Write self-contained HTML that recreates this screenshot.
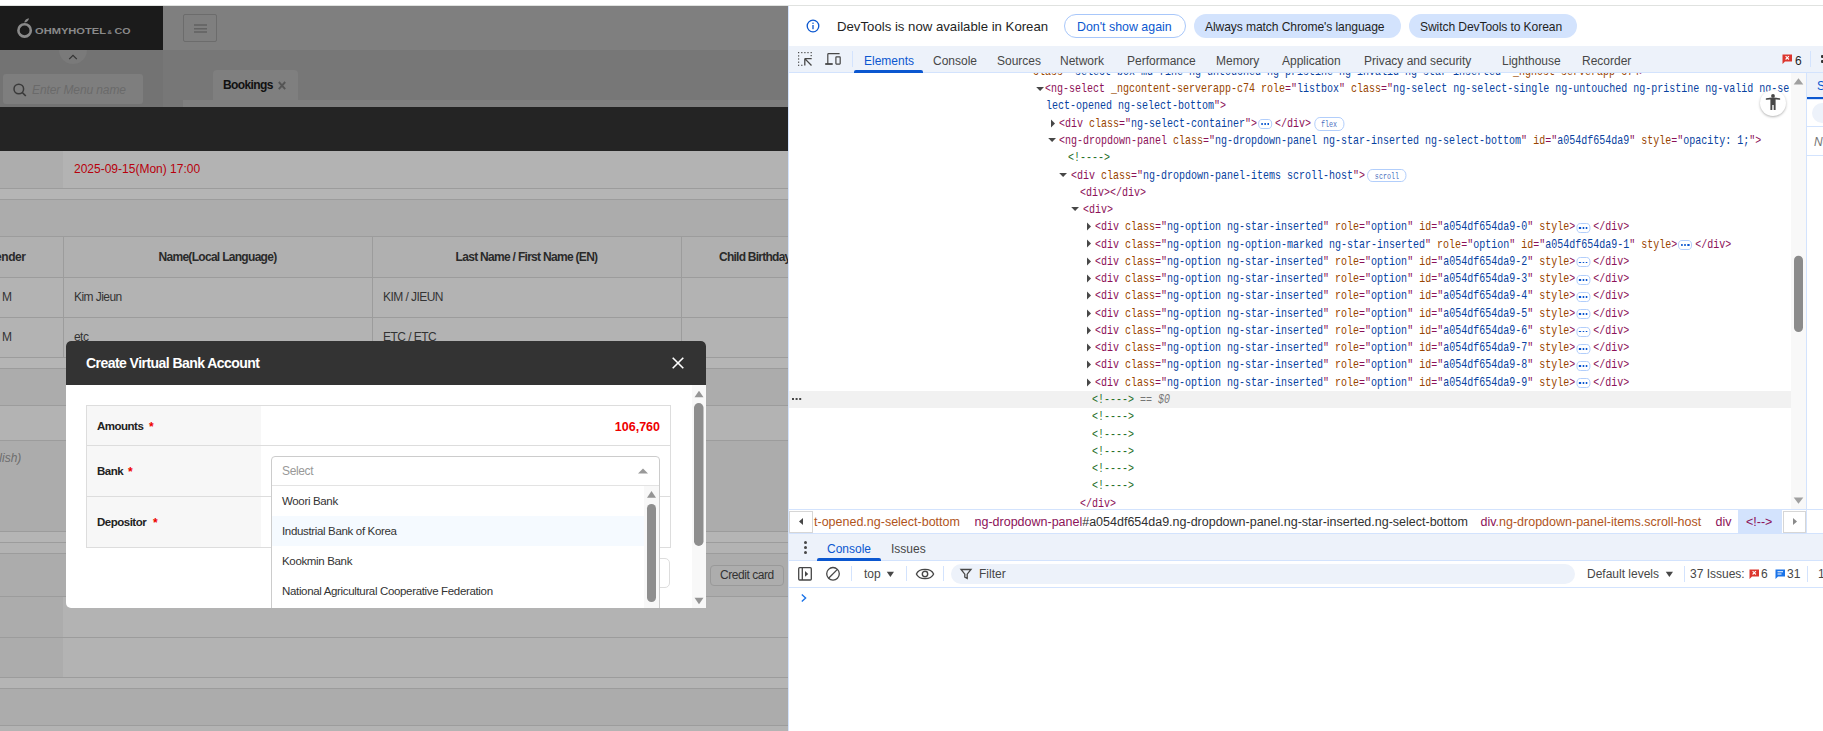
<!DOCTYPE html>
<html><head><meta charset="utf-8">
<style>
*{box-sizing:border-box;margin:0;padding:0}
html,body{width:1823px;height:731px;overflow:hidden;background:#fff;font-family:"Liberation Sans",sans-serif}
.a{position:absolute}
.hl{position:absolute;left:0;width:788px;height:1px;background:#9c9c9c}
.t{position:absolute;white-space:nowrap;line-height:1}
.mono{font-family:"Liberation Mono",monospace}
.cl{position:absolute;white-space:pre;font-family:"Liberation Mono",monospace;font-size:13px;height:17.27px;line-height:17.27px;transform:scaleX(0.76923);transform-origin:0 50%}
.cl i{display:inline-block;font-style:normal;vertical-align:middle}
.bdots{display:inline-flex !important;align-items:center;justify-content:center;width:18.2px;height:10px;border:1px solid #a8c7fa;border-radius:5px;margin:0 3.9px 0 1.3px;position:relative;top:1px}
.bdots b{display:block;width:2.2px;height:1.8px;background:#0b57d0;margin:0 1px}
.bg{height:13.5px;border:1px solid #a8c7fa;border-radius:7px;font-family:"Liberation Mono",monospace;font-size:8.7px;line-height:15px;color:#4a6fc0;overflow:hidden;text-align:center;position:relative;top:0.5px}
.eq{color:#757575;font-style:italic}
.tb{top:55px;font-size:12px;color:#474747}
.tb2{top:542.5px;font-size:12px;color:#474747}
.bc{top:516px;font-size:12.5px}
</style></head><body>
<!-- ================= PAGE ================= -->
<div class="a" style="left:0;top:0;width:788px;height:731px;overflow:hidden">
  <div class="a" style="left:0;top:6px;width:788px;height:725px;background:#b3b3b3"></div>
  <!-- header band -->
  <div class="a" style="left:163px;top:6px;width:625px;height:44px;background:#7f7f7f"></div>
  <div class="a" style="left:0;top:6px;width:163px;height:44px;background:#1b1b1b"></div>
  <!-- hamburger -->
  <div class="a" style="left:183px;top:14px;width:34px;height:28px;border:1px solid #6c6c6c;border-radius:2px"></div>
  <svg class="a" style="left:194px;top:22px" width="13" height="12" viewBox="0 0 13 12"><path d="M0 3 H13 M0 6.7 H13 M0 10 H13" stroke="#626262" stroke-width="1.5"/></svg>
  <!-- sidebar under logo -->
  <div class="a" style="left:0;top:50px;width:163px;height:57px;background:#737373"></div>
  <div class="a" style="left:59px;top:36px;width:28px;height:28px;border-radius:50%;background:#7a7a7a"></div>
  <div class="a" style="left:0;top:6px;width:163px;height:44px;background:#1b1b1b"></div>
  <svg class="a" style="left:0;top:0" width="163" height="50" viewBox="0 0 163 50">
    <circle cx="24.6" cy="30.4" r="6.2" fill="none" stroke="#8a8a8a" stroke-width="2.6"/>
    <path d="M24.2 22.6 C24.6 20 26.6 18.6 29 18.2 C28.6 20.6 26.8 22.2 24.2 22.6Z" fill="#8a8a8a"/>
    <text x="35" y="34.2" font-family="Liberation Sans" font-weight="bold" font-size="9.7" fill="#8a8a8a" textLength="71" lengthAdjust="spacingAndGlyphs">OHMYHOTEL</text>
    <text x="107.5" y="34.2" font-family="Liberation Sans" font-weight="bold" font-size="6" fill="#8a8a8a">&amp;</text>
    <text x="114.5" y="34.2" font-family="Liberation Sans" font-weight="bold" font-size="9.7" fill="#8a8a8a" textLength="16" lengthAdjust="spacingAndGlyphs">CO</text>
  </svg>
  <svg class="a" style="left:0;top:50px" width="163" height="57" viewBox="0 0 163 57">
    <path d="M69.2 9.2 L73 5.4 L76.8 9.2" fill="none" stroke="#333" stroke-width="1.2"/>
  </svg>
  <div class="a" style="left:3px;top:74px;width:140px;height:30px;background:#7e7e7e;border-radius:3px"></div>
  <svg class="a" style="left:12px;top:82px" width="16" height="16" viewBox="0 0 16 16">
    <circle cx="6.8" cy="7" r="4.8" fill="none" stroke="#3a3a3a" stroke-width="1.5"/>
    <path d="M10.3 10.5 L13.8 14" stroke="#3a3a3a" stroke-width="1.7"/>
  </svg>
  <div class="t" style="left:32px;top:84px;font-size:12px;font-style:italic;color:#6a6a6a;letter-spacing:-0.1px">Enter Menu name</div>
  <!-- tab strip -->
  <div class="a" style="left:163px;top:50px;width:625px;height:57px;background:#777"></div>
  <div class="a" style="left:183px;top:100px;width:605px;height:7px;background:#7f7f7f"></div>
  <div class="a" style="left:213px;top:70px;width:85px;height:30px;background:#7f7f7f;border-radius:4px 4px 0 0"></div>
  <div class="t" style="left:223px;top:79px;font-size:12px;font-weight:bold;color:#111;letter-spacing:-0.6px">Bookings</div>
  <svg class="a" style="left:277px;top:80px" width="10" height="11" viewBox="0 0 10 11"><path d="M1.8 2 L8.2 9.2 M8.2 2 L1.8 9.2" stroke="#555" stroke-width="1.9"/></svg>
  <!-- dark band -->
  <div class="a" style="left:0;top:107px;width:788px;height:44px;background:#242424"></div>
  <!-- content -->
  <div class="a" style="left:0;top:151px;width:63px;height:37px;background:#adadad"></div>
  <div class="t" style="left:74px;top:163px;font-size:12px;color:#b8000c">2025-09-15(Mon) 17:00</div>
  <div class="hl" style="top:188px"></div>
  <div class="a" style="left:0;top:189px;width:788px;height:10px;background:#b5b5b5"></div>
  <div class="hl" style="top:199px"></div>
  <div class="a" style="left:0;top:200px;width:788px;height:36px;background:#acacac"></div>
  <div class="hl" style="top:236px"></div>
  <div class="a" style="left:0;top:237px;width:788px;height:40px;background:#b0b0b0"></div>
  <div class="hl" style="top:277px"></div>
  <div class="hl" style="top:317px"></div>
  <div class="hl" style="top:357px"></div>
  <div class="a" style="left:63px;top:237px;width:1px;height:120px;background:#9c9c9c"></div>
  <div class="a" style="left:372px;top:237px;width:1px;height:120px;background:#9c9c9c"></div>
  <div class="a" style="left:681px;top:237px;width:1px;height:120px;background:#9c9c9c"></div>
  <div class="t" style="left:-14px;top:251px;font-size:12px;font-weight:bold;color:#2a2a2a;letter-spacing:-0.4px">Gender</div>
  <div class="t" style="left:63px;width:309px;text-align:center;top:251px;font-size:12px;font-weight:bold;color:#2a2a2a;letter-spacing:-0.7px">Name(Local Language)</div>
  <div class="t" style="left:372px;width:309px;text-align:center;top:251px;font-size:12px;font-weight:bold;color:#2a2a2a;letter-spacing:-0.7px">Last Name / First Name (EN)</div>
  <div class="t" style="left:719px;top:251px;font-size:12px;font-weight:bold;color:#2a2a2a;letter-spacing:-0.75px">Child Birthday</div>
  <div class="t" style="left:2px;top:291px;font-size:12px;color:#333;letter-spacing:-0.55px">M</div>
  <div class="t" style="left:74px;top:291px;font-size:12px;color:#333;letter-spacing:-0.55px">Kim Jieun</div>
  <div class="t" style="left:383px;top:291px;font-size:12px;color:#333;letter-spacing:-0.55px">KIM / JIEUN</div>
  <div class="t" style="left:2px;top:331px;font-size:12px;color:#333;letter-spacing:-0.55px">M</div>
  <div class="t" style="left:74px;top:331px;font-size:12px;color:#333;letter-spacing:-0.55px">etc</div>
  <div class="t" style="left:383px;top:331px;font-size:12px;color:#333;letter-spacing:-0.55px">ETC / ETC</div>
  <div class="a" style="left:0;top:358px;width:788px;height:10px;background:#b5b5b5"></div>
  <div class="hl" style="top:368px"></div>
  <div class="a" style="left:0;top:369px;width:788px;height:36px;background:#acacac"></div>
  <div class="hl" style="top:405px"></div>
  <div class="hl" style="top:440px"></div>
  <div class="a" style="left:0;top:441px;width:788px;height:90px;background:#acacac"></div>
  <div class="t" style="left:-26px;top:452px;font-size:12px;font-style:italic;color:#6e6e6e">(English)</div>
  <div class="hl" style="top:531px"></div>
  <div class="a" style="left:0;top:532px;width:788px;height:10px;background:#b5b5b5"></div>
  <div class="hl" style="top:542px"></div>
  <div class="hl" style="top:553px"></div>
  <div class="a" style="left:0;top:554px;width:788px;height:42px;background:#acacac"></div>
  <div class="hl" style="top:596px"></div>
  <div class="a" style="left:0;top:597px;width:63px;height:80px;background:#acacac"></div>
  <div class="hl" style="top:637px"></div>
  <div class="hl" style="top:677px"></div>
  <div class="a" style="left:0;top:678px;width:788px;height:10px;background:#b5b5b5"></div>
  <div class="hl" style="top:688px"></div>
  <div class="a" style="left:0;top:689px;width:788px;height:36px;background:#acacac"></div>
  <div class="hl" style="top:725px"></div>
  <!-- credit card button -->
  <div class="a" style="left:710px;top:565px;width:74px;height:21px;border:1px solid #999;border-radius:4px;background:#adadad"></div>
  <div class="t" style="left:720px;top:569px;font-size:12px;color:#333;letter-spacing:-0.45px">Credit card</div>
  <!-- ========== MODAL ========== -->
  <div class="a" style="left:66px;top:341px;width:640px;height:267px;background:#fff;border-radius:5px 5px 0 5px;overflow:hidden">
    <div class="a" style="left:0;top:0;width:640px;height:44px;background:#333"></div>
    <div class="t" style="left:20px;top:15px;font-size:14px;font-weight:bold;color:#fff;letter-spacing:-0.55px">Create Virtual Bank Account</div>
    <svg class="a" style="left:605px;top:15px" width="14" height="14" viewBox="0 0 14 14"><path d="M1.7 1.7 L12.3 12.3 M12.3 1.7 L1.7 12.3" stroke="#fff" stroke-width="1.6"/></svg>
    <!-- modal scrollbar -->
    <div class="a" style="left:626px;top:44px;width:14px;height:223px;background:#f8f8f8"></div>
    <svg class="a" style="left:626px;top:44px" width="14" height="223" viewBox="0 0 14 223">
      <path d="M2.5 12.3 L7 5.8 L11.5 12.3Z" fill="#959595"/>
      <path d="M2.5 212.7 L7 219.2 L11.5 212.7Z" fill="#959595"/>
      <rect x="2" y="18" width="9.5" height="143" rx="4.75" fill="#8e8e8e"/>
    </svg>
    <!-- table -->
    <div class="a" style="left:20px;top:64px;width:585px;height:143px;border:1px solid #ddd"></div>
    <div class="a" style="left:21px;top:65px;width:174px;height:141px;background:#f7f7f7"></div>
    <div class="a" style="left:20px;top:104px;width:585px;height:1px;background:#ddd"></div>
    <div class="a" style="left:20px;top:155px;width:585px;height:1px;background:#ddd"></div>
    <div class="t" style="left:31px;top:80px;font-size:11.5px;font-weight:bold;color:#222;letter-spacing:-0.5px">Amounts</div>
    <div class="t" style="left:83px;top:80px;font-size:12px;font-weight:bold;color:#e00">*</div>
    <div class="t" style="left:31px;top:125px;font-size:11.5px;font-weight:bold;color:#222;letter-spacing:-0.5px">Bank</div>
    <div class="t" style="left:62px;top:125px;font-size:12px;font-weight:bold;color:#e00">*</div>
    <div class="t" style="left:31px;top:176px;font-size:11.5px;font-weight:bold;color:#222;letter-spacing:-0.5px">Depositor</div>
    <div class="t" style="left:87px;top:176px;font-size:12px;font-weight:bold;color:#e00">*</div>
    <div class="t" style="left:480px;width:114px;text-align:right;top:80px;font-size:12.5px;font-weight:bold;color:#e00">106,760</div>
    <!-- hidden button below table -->
    <div class="a" style="left:480px;top:217px;width:124px;height:30px;border:1px solid #ddd;border-radius:5px"></div>
    <!-- select -->
    <div class="a" style="left:205px;top:115px;width:389px;height:160px;background:#fff;border:1px solid #ccc;border-radius:4px 4px 0 0"></div>
    <div class="a" style="left:206px;top:144px;width:387px;height:1px;background:#e3e3e3"></div>
    <div class="t" style="left:216px;top:124px;font-size:12px;color:#999;letter-spacing:-0.35px">Select</div>
    <svg class="a" style="left:571px;top:126px" width="12" height="8" viewBox="0 0 12 8"><path d="M1 6.5 L6 1.5 L11 6.5Z" fill="#999"/></svg>
    <div class="a" style="left:206px;top:175px;width:372px;height:30px;background:#f5faff"></div>
    <div class="t" style="left:216px;top:155px;font-size:11.5px;color:#333;letter-spacing:-0.34px">Woori Bank</div>
    <div class="t" style="left:216px;top:185px;font-size:11.5px;color:#333;letter-spacing:-0.34px">Industrial Bank of Korea</div>
    <div class="t" style="left:216px;top:215px;font-size:11.5px;color:#333;letter-spacing:-0.34px">Kookmin Bank</div>
    <div class="t" style="left:216px;top:245px;font-size:11.5px;color:#333;letter-spacing:-0.34px">National Agricultural Cooperative Federation</div>
    <!-- dropdown scrollbar -->
    <div class="a" style="left:578px;top:145px;width:15px;height:122px;background:#f8f8f8"></div>
    <svg class="a" style="left:578px;top:145px" width="15" height="122" viewBox="0 0 15 122">
      <path d="M3 11.7 L7.5 5 L12 11.7Z" fill="#959595"/>
      <rect x="3" y="18" width="9" height="98" rx="4.5" fill="#8e8e8e"/>
    </svg>
  </div>
</div>
<!-- ================= DEVTOOLS ================= -->
<div class="a" style="left:0;top:5px;width:1823px;height:1px;background:#e0e2e0"></div>
<div id="dt" class="a" style="left:788px;top:0;width:1035px;height:731px;overflow:hidden">
  <div class="a" style="left:0;top:6px;width:1035px;height:725px;background:#fff"></div>
  <div class="a" style="left:0;top:6px;width:1px;height:725px;background:#d3e3fd"></div>
  <!-- infobar -->
  <svg class="a" style="left:18px;top:19px" width="14" height="14" viewBox="0 0 14 14">
    <circle cx="7" cy="7" r="5.8" fill="none" stroke="#0b57d0" stroke-width="1.3"/>
    <rect x="6.35" y="6" width="1.3" height="4.2" fill="#0b57d0"/><rect x="6.35" y="3.6" width="1.3" height="1.3" fill="#0b57d0"/>
  </svg>
  <div class="t" style="left:49px;top:20px;font-size:13.2px;color:#1f1f1f">DevTools is now available in Korean</div>
  <div class="a" style="left:276px;top:14px;width:122px;height:24px;border:1px solid #a8c7fa;border-radius:12px"></div>
  <div class="t" style="left:289px;top:21px;font-size:12.4px;color:#0b57d0">Don't show again</div>
  <div class="a" style="left:406px;top:14px;width:207px;height:24px;background:#d3e3fd;border-radius:12px"></div>
  <div class="t" style="left:417px;top:21px;font-size:12.1px;color:#1f1f1f;letter-spacing:-0.1px">Always match Chrome's language</div>
  <div class="a" style="left:621px;top:14px;width:168px;height:24px;background:#d3e3fd;border-radius:12px"></div>
  <div class="t" style="left:632px;top:21px;font-size:12.1px;color:#1f1f1f;letter-spacing:-0.1px">Switch DevTools to Korean</div>
  <!-- main tabbar -->
  <div class="a" style="left:1px;top:46px;width:1034px;height:27px;background:#edf2fa;border-bottom:1px solid #d3e3fd"></div>
  <svg class="a" style="left:9px;top:51px" width="17" height="17" viewBox="0 0 17 17">
    <rect x="1.0" y="1.0" width="1.2" height="1.2" fill="#474747"/><rect x="4.2" y="1.0" width="1.2" height="1.2" fill="#474747"/><rect x="7.3" y="1.0" width="1.2" height="1.2" fill="#474747"/><rect x="10.4" y="1.0" width="1.2" height="1.2" fill="#474747"/><rect x="13.6" y="1.0" width="1.2" height="1.2" fill="#474747"/><rect x="1.0" y="4.3" width="1.2" height="1.2" fill="#474747"/><rect x="1.0" y="7.4" width="1.2" height="1.2" fill="#474747"/><rect x="1.0" y="10.6" width="1.2" height="1.2" fill="#474747"/><rect x="1.0" y="13.7" width="1.2" height="1.2" fill="#474747"/><rect x="13.6" y="4.0" width="1.2" height="1.2" fill="#474747"/><rect x="4.2" y="13.7" width="1.2" height="1.2" fill="#474747"/>
    <path d="M7.8 7.6 H14.7 M7.8 7.6 V14.5 M7.8 7.6 L14.5 14.5" fill="none" stroke="#474747" stroke-width="1.3"/>
  </svg>
  <svg class="a" style="left:36px;top:52px" width="18" height="14" viewBox="0 0 18 14">
    <path d="M3.8 12 V2.5 Q3.8 1.7 4.6 1.7 H15.6" fill="none" stroke="#474747" stroke-width="1.2"/>
    <path d="M1.2 12 H8.7" stroke="#474747" stroke-width="1.8"/>
    <rect x="11.9" y="4.9" width="4.3" height="7.2" rx="0.5" fill="none" stroke="#474747" stroke-width="1.2"/>
  </svg>
  <div class="a" style="left:64px;top:51px;width:1px;height:16px;background:#d3e3fd"></div>
  <div class="t tb" style="left:76px;color:#0b57d0">Elements</div>
  <div class="a" style="left:66px;top:70px;width:69px;height:3px;background:#0b57d0;border-radius:2px 2px 0 0"></div>
  <div class="t tb" style="left:145px">Console</div>
  <div class="t tb" style="left:209px">Sources</div>
  <div class="t tb" style="left:272px">Network</div>
  <div class="t tb" style="left:339px">Performance</div>
  <div class="t tb" style="left:428px">Memory</div>
  <div class="t tb" style="left:494px">Application</div>
  <div class="t tb" style="left:576px">Privacy and security</div>
  <div class="t tb" style="left:714px">Lighthouse</div>
  <div class="t tb" style="left:794px">Recorder</div>
  <svg class="a" style="left:994px;top:54px" width="11" height="11" viewBox="0 0 11 11">
    <path d="M0.5 0.5 H10 V7.5 H3 L0.5 10Z" fill="#dc362e"/>
    <path d="M3.6 2.2 L6.9 5.5 M6.9 2.2 L3.6 5.5" stroke="#fff" stroke-width="1.1"/>
  </svg>
  <div class="t tb" style="left:1007px;color:#1f1f1f">6</div>
  <div class="a" style="left:1022px;top:51px;width:1px;height:16px;background:#d3e3fd"></div>
  <div class="a" style="left:1033.4px;top:55px;width:3px;height:3px;border-radius:1px;background:#333"></div>
  <div class="a" style="left:1033.4px;top:60px;width:3px;height:3px;border-radius:1px;background:#333"></div>
  <!-- elements panel -->
  <div class="a" style="left:1px;top:390.5px;width:1002px;height:17.5px;background:#f1f1f1"></div>
  <div class="a" style="left:3.5px;top:398px;width:2px;height:2px;background:#474747;box-shadow:3.6px 0 0 #474747,7.2px 0 0 #474747"></div>
  <!-- scrollbar -->
  <div class="a" style="left:1003px;top:73px;width:15px;height:436px;background:#f8f8f8"></div>
  <svg class="a" style="left:1003px;top:73px" width="15" height="436" viewBox="0 0 15 436">
    <path d="M2.7 11.4 L7.5 5.2 L12.3 11.4Z" fill="#a0a0a0"/>
    <path d="M2.7 424.6 L7.5 430.8 L12.3 424.6Z" fill="#a0a0a0"/>
    <rect x="3" y="182.7" width="9" height="76.3" rx="4.5" fill="#8b8b8b"/>
  </svg>
  <div class="a" style="left:1018px;top:73px;width:1px;height:436px;background:#d3e3fd"></div>
  <!-- styles panel slice -->
  <div class="a" style="left:1019px;top:73px;width:16px;height:26px;background:#edf2fa"></div>
  <div class="t" style="left:1029px;top:80px;font-size:12px;color:#0b57d0">Styles</div>
  <div class="a" style="left:1019px;top:96.5px;width:16px;height:3px;background:#0b57d0"></div>
  <div class="a" style="left:1019px;top:99px;width:16px;height:1px;background:#d3e3fd"></div>
  <div class="a" style="left:1024px;top:103px;width:40px;height:20px;background:#edf2fa;border-radius:10px"></div>
  <div class="a" style="left:1019px;top:126px;width:16px;height:1px;background:#d3e3fd"></div>
  <div class="t" style="left:1026px;top:136px;font-size:12px;font-style:italic;color:#757575">No</div>
  <div class="a" style="left:1019px;top:155px;width:16px;height:1px;background:#d3e3fd"></div>
<div class="a" style="left:0;top:73px;width:1003px;height:436px;overflow:hidden">
<div class="a" style="left:0;top:-73px">
<div class="cl" style="left:244.7px;top:62.87px"><span style="color:#994500">class</span><span style="color:#8c1158">="</span><span style="color:#0842a0">select-box md fine ng-untouched ng-pristine ng-invalid ng-star-inserted</span><span style="color:#8c1158">"</span> <span style="color:#994500">_nghost-serverapp-c74</span><span style="color:#8c1158">&gt;</span></div>
<svg class="a" style="left:247.6px;top:85.5px" width="9" height="6" viewBox="0 0 9 6"><path d="M0.2 1 L8 1 L4.1 5Z" fill="#474747"/></svg>
<div class="cl" style="left:257.0px;top:80.16px"><span style="color:#8c1158">&lt;ng-select</span> <span style="color:#994500">_ngcontent-serverapp-c74</span> <span style="color:#994500">role</span><span style="color:#8c1158">="</span><span style="color:#0842a0">listbox</span><span style="color:#8c1158">"</span> <span style="color:#994500">class</span><span style="color:#8c1158">="</span><span style="color:#0842a0">ng-select ng-select-single ng-untouched ng-pristine ng-valid ng-se</span></div>
<div class="cl" style="left:257.8px;top:97.43px"><span style="color:#0842a0">lect-opened ng-select-bottom</span><span style="color:#8c1158">"</span><span style="color:#8c1158">&gt;</span></div>
<svg class="a" style="left:262.0px;top:118.5px" width="6" height="9" viewBox="0 0 6 9"><path d="M1 0.5 L5 4.5 L1 8.5Z" fill="#474747"/></svg>
<div class="cl" style="left:271.0px;top:114.70px"><span style="color:#8c1158">&lt;div</span> <span style="color:#994500">class</span><span style="color:#8c1158">="</span><span style="color:#0842a0">ng-select-container</span><span style="color:#8c1158">"</span><span style="color:#8c1158">&gt;</span><i class="bdots"><b></b><b></b><b></b></i><span style="color:#8c1158">&lt;/div&gt;</span><i class="bg" style="width:39px;margin-left:3.9px">flex</i></div>
<svg class="a" style="left:259.8px;top:137.3px" width="9" height="6" viewBox="0 0 9 6"><path d="M0.2 1 L8 1 L4.1 5Z" fill="#474747"/></svg>
<div class="cl" style="left:271.0px;top:131.98px"><span style="color:#8c1158">&lt;ng-dropdown-panel</span> <span style="color:#994500">class</span><span style="color:#8c1158">="</span><span style="color:#0842a0">ng-dropdown-panel ng-star-inserted ng-select-bottom</span><span style="color:#8c1158">"</span> <span style="color:#994500">id</span><span style="color:#8c1158">="</span><span style="color:#0842a0">a054df654da9</span><span style="color:#8c1158">"</span> <span style="color:#994500">style</span><span style="color:#8c1158">="</span><span style="color:#0842a0">opacity: 1;</span><span style="color:#8c1158">"</span><span style="color:#8c1158">&gt;</span></div>
<div class="cl" style="left:279.7px;top:149.25px"><span style="color:#236e25">&lt;!----&gt;</span></div>
<svg class="a" style="left:271.2px;top:171.8px" width="9" height="6" viewBox="0 0 9 6"><path d="M0.2 1 L8 1 L4.1 5Z" fill="#474747"/></svg>
<div class="cl" style="left:283.0px;top:166.52px"><span style="color:#8c1158">&lt;div</span> <span style="color:#994500">class</span><span style="color:#8c1158">="</span><span style="color:#0842a0">ng-dropdown-panel-items scroll-host</span><span style="color:#8c1158">"</span><span style="color:#8c1158">&gt;</span><i class="bg" style="width:51.5px;margin-left:2.6px">scroll</i></div>
<div class="cl" style="left:291.7px;top:183.79px"><span style="color:#8c1158">&lt;div&gt;&lt;/div&gt;</span></div>
<svg class="a" style="left:283.2px;top:206.4px" width="9" height="6" viewBox="0 0 9 6"><path d="M0.2 1 L8 1 L4.1 5Z" fill="#474747"/></svg>
<div class="cl" style="left:295.0px;top:201.06px"><span style="color:#8c1158">&lt;div&gt;</span></div>
<svg class="a" style="left:298.0px;top:222.2px" width="6" height="9" viewBox="0 0 6 9"><path d="M1 0.5 L5 4.5 L1 8.5Z" fill="#474747"/></svg>
<div class="cl" style="left:307.0px;top:218.33px"><span style="color:#8c1158">&lt;div</span> <span style="color:#994500">class</span><span style="color:#8c1158">="</span><span style="color:#0842a0">ng-option ng-star-inserted</span><span style="color:#8c1158">"</span> <span style="color:#994500">role</span><span style="color:#8c1158">="</span><span style="color:#0842a0">option</span><span style="color:#8c1158">"</span> <span style="color:#994500">id</span><span style="color:#8c1158">="</span><span style="color:#0842a0">a054df654da9-0</span><span style="color:#8c1158">"</span> <span style="color:#994500">style</span><span style="color:#8c1158">&gt;</span><i class="bdots"><b></b><b></b><b></b></i><span style="color:#8c1158">&lt;/div&gt;</span></div>
<svg class="a" style="left:298.0px;top:239.4px" width="6" height="9" viewBox="0 0 6 9"><path d="M1 0.5 L5 4.5 L1 8.5Z" fill="#474747"/></svg>
<div class="cl" style="left:307.0px;top:235.60px"><span style="color:#8c1158">&lt;div</span> <span style="color:#994500">class</span><span style="color:#8c1158">="</span><span style="color:#0842a0">ng-option ng-option-marked ng-star-inserted</span><span style="color:#8c1158">"</span> <span style="color:#994500">role</span><span style="color:#8c1158">="</span><span style="color:#0842a0">option</span><span style="color:#8c1158">"</span> <span style="color:#994500">id</span><span style="color:#8c1158">="</span><span style="color:#0842a0">a054df654da9-1</span><span style="color:#8c1158">"</span> <span style="color:#994500">style</span><span style="color:#8c1158">&gt;</span><i class="bdots"><b></b><b></b><b></b></i><span style="color:#8c1158">&lt;/div&gt;</span></div>
<svg class="a" style="left:298.0px;top:256.7px" width="6" height="9" viewBox="0 0 6 9"><path d="M1 0.5 L5 4.5 L1 8.5Z" fill="#474747"/></svg>
<div class="cl" style="left:307.0px;top:252.87px"><span style="color:#8c1158">&lt;div</span> <span style="color:#994500">class</span><span style="color:#8c1158">="</span><span style="color:#0842a0">ng-option ng-star-inserted</span><span style="color:#8c1158">"</span> <span style="color:#994500">role</span><span style="color:#8c1158">="</span><span style="color:#0842a0">option</span><span style="color:#8c1158">"</span> <span style="color:#994500">id</span><span style="color:#8c1158">="</span><span style="color:#0842a0">a054df654da9-2</span><span style="color:#8c1158">"</span> <span style="color:#994500">style</span><span style="color:#8c1158">&gt;</span><i class="bdots"><b></b><b></b><b></b></i><span style="color:#8c1158">&lt;/div&gt;</span></div>
<svg class="a" style="left:298.0px;top:274.0px" width="6" height="9" viewBox="0 0 6 9"><path d="M1 0.5 L5 4.5 L1 8.5Z" fill="#474747"/></svg>
<div class="cl" style="left:307.0px;top:270.14px"><span style="color:#8c1158">&lt;div</span> <span style="color:#994500">class</span><span style="color:#8c1158">="</span><span style="color:#0842a0">ng-option ng-star-inserted</span><span style="color:#8c1158">"</span> <span style="color:#994500">role</span><span style="color:#8c1158">="</span><span style="color:#0842a0">option</span><span style="color:#8c1158">"</span> <span style="color:#994500">id</span><span style="color:#8c1158">="</span><span style="color:#0842a0">a054df654da9-3</span><span style="color:#8c1158">"</span> <span style="color:#994500">style</span><span style="color:#8c1158">&gt;</span><i class="bdots"><b></b><b></b><b></b></i><span style="color:#8c1158">&lt;/div&gt;</span></div>
<svg class="a" style="left:298.0px;top:291.2px" width="6" height="9" viewBox="0 0 6 9"><path d="M1 0.5 L5 4.5 L1 8.5Z" fill="#474747"/></svg>
<div class="cl" style="left:307.0px;top:287.41px"><span style="color:#8c1158">&lt;div</span> <span style="color:#994500">class</span><span style="color:#8c1158">="</span><span style="color:#0842a0">ng-option ng-star-inserted</span><span style="color:#8c1158">"</span> <span style="color:#994500">role</span><span style="color:#8c1158">="</span><span style="color:#0842a0">option</span><span style="color:#8c1158">"</span> <span style="color:#994500">id</span><span style="color:#8c1158">="</span><span style="color:#0842a0">a054df654da9-4</span><span style="color:#8c1158">"</span> <span style="color:#994500">style</span><span style="color:#8c1158">&gt;</span><i class="bdots"><b></b><b></b><b></b></i><span style="color:#8c1158">&lt;/div&gt;</span></div>
<svg class="a" style="left:298.0px;top:308.5px" width="6" height="9" viewBox="0 0 6 9"><path d="M1 0.5 L5 4.5 L1 8.5Z" fill="#474747"/></svg>
<div class="cl" style="left:307.0px;top:304.68px"><span style="color:#8c1158">&lt;div</span> <span style="color:#994500">class</span><span style="color:#8c1158">="</span><span style="color:#0842a0">ng-option ng-star-inserted</span><span style="color:#8c1158">"</span> <span style="color:#994500">role</span><span style="color:#8c1158">="</span><span style="color:#0842a0">option</span><span style="color:#8c1158">"</span> <span style="color:#994500">id</span><span style="color:#8c1158">="</span><span style="color:#0842a0">a054df654da9-5</span><span style="color:#8c1158">"</span> <span style="color:#994500">style</span><span style="color:#8c1158">&gt;</span><i class="bdots"><b></b><b></b><b></b></i><span style="color:#8c1158">&lt;/div&gt;</span></div>
<svg class="a" style="left:298.0px;top:325.8px" width="6" height="9" viewBox="0 0 6 9"><path d="M1 0.5 L5 4.5 L1 8.5Z" fill="#474747"/></svg>
<div class="cl" style="left:307.0px;top:321.94px"><span style="color:#8c1158">&lt;div</span> <span style="color:#994500">class</span><span style="color:#8c1158">="</span><span style="color:#0842a0">ng-option ng-star-inserted</span><span style="color:#8c1158">"</span> <span style="color:#994500">role</span><span style="color:#8c1158">="</span><span style="color:#0842a0">option</span><span style="color:#8c1158">"</span> <span style="color:#994500">id</span><span style="color:#8c1158">="</span><span style="color:#0842a0">a054df654da9-6</span><span style="color:#8c1158">"</span> <span style="color:#994500">style</span><span style="color:#8c1158">&gt;</span><i class="bdots"><b></b><b></b><b></b></i><span style="color:#8c1158">&lt;/div&gt;</span></div>
<svg class="a" style="left:298.0px;top:343.1px" width="6" height="9" viewBox="0 0 6 9"><path d="M1 0.5 L5 4.5 L1 8.5Z" fill="#474747"/></svg>
<div class="cl" style="left:307.0px;top:339.22px"><span style="color:#8c1158">&lt;div</span> <span style="color:#994500">class</span><span style="color:#8c1158">="</span><span style="color:#0842a0">ng-option ng-star-inserted</span><span style="color:#8c1158">"</span> <span style="color:#994500">role</span><span style="color:#8c1158">="</span><span style="color:#0842a0">option</span><span style="color:#8c1158">"</span> <span style="color:#994500">id</span><span style="color:#8c1158">="</span><span style="color:#0842a0">a054df654da9-7</span><span style="color:#8c1158">"</span> <span style="color:#994500">style</span><span style="color:#8c1158">&gt;</span><i class="bdots"><b></b><b></b><b></b></i><span style="color:#8c1158">&lt;/div&gt;</span></div>
<svg class="a" style="left:298.0px;top:360.3px" width="6" height="9" viewBox="0 0 6 9"><path d="M1 0.5 L5 4.5 L1 8.5Z" fill="#474747"/></svg>
<div class="cl" style="left:307.0px;top:356.49px"><span style="color:#8c1158">&lt;div</span> <span style="color:#994500">class</span><span style="color:#8c1158">="</span><span style="color:#0842a0">ng-option ng-star-inserted</span><span style="color:#8c1158">"</span> <span style="color:#994500">role</span><span style="color:#8c1158">="</span><span style="color:#0842a0">option</span><span style="color:#8c1158">"</span> <span style="color:#994500">id</span><span style="color:#8c1158">="</span><span style="color:#0842a0">a054df654da9-8</span><span style="color:#8c1158">"</span> <span style="color:#994500">style</span><span style="color:#8c1158">&gt;</span><i class="bdots"><b></b><b></b><b></b></i><span style="color:#8c1158">&lt;/div&gt;</span></div>
<svg class="a" style="left:298.0px;top:377.6px" width="6" height="9" viewBox="0 0 6 9"><path d="M1 0.5 L5 4.5 L1 8.5Z" fill="#474747"/></svg>
<div class="cl" style="left:307.0px;top:373.75px"><span style="color:#8c1158">&lt;div</span> <span style="color:#994500">class</span><span style="color:#8c1158">="</span><span style="color:#0842a0">ng-option ng-star-inserted</span><span style="color:#8c1158">"</span> <span style="color:#994500">role</span><span style="color:#8c1158">="</span><span style="color:#0842a0">option</span><span style="color:#8c1158">"</span> <span style="color:#994500">id</span><span style="color:#8c1158">="</span><span style="color:#0842a0">a054df654da9-9</span><span style="color:#8c1158">"</span> <span style="color:#994500">style</span><span style="color:#8c1158">&gt;</span><i class="bdots"><b></b><b></b><b></b></i><span style="color:#8c1158">&lt;/div&gt;</span></div>
<div class="cl" style="left:304.0px;top:391.03px"><span style="color:#236e25">&lt;!----&gt;</span><span class="eq"> == $0</span></div>
<div class="cl" style="left:304.0px;top:408.30px"><span style="color:#236e25">&lt;!----&gt;</span></div>
<div class="cl" style="left:304.0px;top:425.56px"><span style="color:#236e25">&lt;!----&gt;</span></div>
<div class="cl" style="left:304.0px;top:442.84px"><span style="color:#236e25">&lt;!----&gt;</span></div>
<div class="cl" style="left:304.0px;top:460.11px"><span style="color:#236e25">&lt;!----&gt;</span></div>
<div class="cl" style="left:304.0px;top:477.38px"><span style="color:#236e25">&lt;!----&gt;</span></div>
<div class="cl" style="left:292.0px;top:494.65px"><span style="color:#8c1158">&lt;/div&gt;</span></div>
</div></div>
  <!-- accessibility button -->
  <div class="a" style="left:971.5px;top:89.8px;width:26.5px;height:26.5px;border-radius:50%;background:#fff;box-shadow:0 1px 2.5px rgba(0,0,0,0.3)"></div>
  <svg class="a" style="left:976px;top:93px" width="19" height="19" viewBox="0 0 19 19">
    <circle cx="9" cy="2.9" r="1.9" fill="#474747"/>
    <path d="M2.6 6 Q9 4.6 15.4 6" fill="none" stroke="#474747" stroke-width="1.7" stroke-linecap="round"/>
    <path d="M6.4 5.8 H11.6 V17 H9.7 V12 H8.3 V17 H6.4Z" fill="#474747"/>
  </svg>
  <!-- breadcrumbs -->
  <div class="a" style="left:1px;top:509px;width:1034px;height:1px;background:#d3e3fd"></div>
  <div class="a" style="left:1px;top:510px;width:1017px;height:23px;background:#fff"></div>
  <div class="a" style="left:1px;top:510.5px;width:24px;height:22px;border:1px solid #d6d6d6;background:#fff"></div>
  <svg class="a" style="left:9px;top:517px" width="8" height="9" viewBox="0 0 8 9"><path d="M6 1 L2 4.5 L6 8Z" fill="#474747"/></svg>
  <div class="t bc" style="left:26px;color:#b0541b">t-opened.ng-select-bottom</div>
  <div class="t bc" style="left:186.5px"><span style="color:#8c1158">ng-dropdown-panel</span><span style="color:#303030">#a054df654da9.ng-dropdown-panel.ng-star-inserted.ng-select-bottom</span></div>
  <div class="t bc" style="left:692.5px"><span style="color:#8c1158">div</span><span style="color:#b0541b">.ng-dropdown-panel-items.scroll-host</span></div>
  <div class="t bc" style="left:927.5px;color:#8c1158">div</div>
  <div class="a" style="left:950px;top:510px;width:44px;height:23px;background:#d3e3fd"></div>
  <div class="t bc" style="left:958px;color:#8c1158">&lt;!--&gt;</div>
  <div class="a" style="left:995px;top:510.5px;width:23px;height:22px;border:1px solid #d6d6d6;background:#fff"></div>
  <svg class="a" style="left:1003px;top:517px" width="8" height="9" viewBox="0 0 8 9"><path d="M2 1 L6 4.5 L2 8Z" fill="#8a8a8a"/></svg>
  <div class="a" style="left:1018px;top:509px;width:1px;height:24px;background:#d3e3fd"></div>
  <!-- drawer tabs -->
  <div class="a" style="left:1px;top:533px;width:1034px;height:28px;background:#edf2fa;border-top:1px solid #d3e3fd;border-bottom:1px solid #d3e3fd"></div>
  <div class="a" style="left:15.5px;top:541px;width:3px;height:3px;border-radius:50%;background:#474747"></div>
  <div class="a" style="left:15.5px;top:546.3px;width:3px;height:3px;border-radius:50%;background:#474747"></div>
  <div class="a" style="left:15.5px;top:551px;width:3px;height:3px;border-radius:50%;background:#474747"></div>
  <div class="t tb2" style="left:39px;color:#0b57d0">Console</div>
  <div class="a" style="left:29px;top:558px;width:64px;height:3px;background:#0b57d0;border-radius:2px 2px 0 0"></div>
  <div class="t tb2" style="left:103px">Issues</div>
  <!-- console toolbar -->
  <div class="a" style="left:1px;top:587px;width:1034px;height:1px;background:#d3e3fd"></div>
  <svg class="a" style="left:9px;top:566px" width="16" height="16" viewBox="0 0 16 16">
    <rect x="1.7" y="1.7" width="12.6" height="12.3" rx="1" fill="none" stroke="#474747" stroke-width="1.3"/>
    <path d="M5.3 1.7 V14" stroke="#474747" stroke-width="1.3"/>
    <path d="M8 5 L11.2 7.9 L8 10.8Z" fill="#474747"/>
  </svg>
  <svg class="a" style="left:37px;top:566px" width="16" height="16" viewBox="0 0 16 16">
    <circle cx="8" cy="7.8" r="6.3" fill="none" stroke="#474747" stroke-width="1.3"/>
    <path d="M3.6 12.2 L12.4 3.4" stroke="#474747" stroke-width="1.3"/>
  </svg>
  <div class="a" style="left:63px;top:566px;width:1px;height:15px;background:#d3e3fd"></div>
  <div class="t tb2" style="left:76px;top:568px;color:#474747">top</div>
  <svg class="a" style="left:98px;top:571px" width="9" height="7" viewBox="0 0 9 7"><path d="M0.8 0.8 H8 L4.4 6Z" fill="#474747"/></svg>
  <div class="a" style="left:118px;top:566px;width:1px;height:15px;background:#d3e3fd"></div>
  <svg class="a" style="left:127px;top:566px" width="20" height="16" viewBox="0 0 20 16">
    <path d="M1.4 8 C4 1.8 16 1.8 18.6 8 C16 14.2 4 14.2 1.4 8Z" fill="none" stroke="#474747" stroke-width="1.3"/>
    <circle cx="10" cy="8" r="2.7" fill="none" stroke="#474747" stroke-width="1.4"/>
  </svg>
  <div class="a" style="left:155px;top:566px;width:1px;height:15px;background:#d3e3fd"></div>
  <div class="a" style="left:163px;top:564px;width:624px;height:20px;background:#edf2fa;border-radius:10px"></div>
  <svg class="a" style="left:171px;top:567px" width="14" height="14" viewBox="0 0 14 14"><path d="M2 2.5 H12 L8.2 7.2 V11.5 L5.8 10.2 V7.2Z" fill="none" stroke="#474747" stroke-width="1.3"/></svg>
  <div class="t tb2" style="left:191px;top:568px;color:#474747">Filter</div>
  <div class="t tb2" style="left:799px;top:568px;color:#474747">Default levels</div>
  <svg class="a" style="left:877px;top:571px" width="9" height="7" viewBox="0 0 9 7"><path d="M0.8 0.8 H8 L4.4 6Z" fill="#474747"/></svg>
  <div class="a" style="left:896px;top:566px;width:1px;height:16px;background:#d3e3fd"></div>
  <div class="t tb2" style="left:902px;top:568px;color:#474747">37 Issues:</div>
  <svg class="a" style="left:961px;top:569px" width="11" height="11" viewBox="0 0 11 11">
    <path d="M0.5 0.5 H10 V7.5 H3 L0.5 10Z" fill="#dc362e"/>
    <path d="M3.6 2.2 L6.9 5.5 M6.9 2.2 L3.6 5.5" stroke="#fff" stroke-width="1.1"/>
  </svg>
  <div class="t tb2" style="left:973px;top:568px;color:#474747">6</div>
  <svg class="a" style="left:987px;top:569px" width="11" height="11" viewBox="0 0 11 11">
    <path d="M0.5 0.5 H10 V7.5 H3 L0.5 10Z" fill="#1a73e8"/>
    <path d="M2.5 2.8 H8 M2.5 5 H6.5" stroke="#fff" stroke-width="1.1"/>
  </svg>
  <div class="t tb2" style="left:999px;top:568px;color:#474747">31</div>
  <div class="a" style="left:1019px;top:566px;width:1px;height:16px;background:#d3e3fd"></div>
  <div class="t tb2" style="left:1030px;top:568px;color:#474747">1</div>
  <svg class="a" style="left:12px;top:593px" width="8" height="10" viewBox="0 0 8 10"><path d="M1.8 1.5 L5.6 5 L1.8 8.5" fill="none" stroke="#1a73e8" stroke-width="1.4"/></svg>
</div>

</body></html>
